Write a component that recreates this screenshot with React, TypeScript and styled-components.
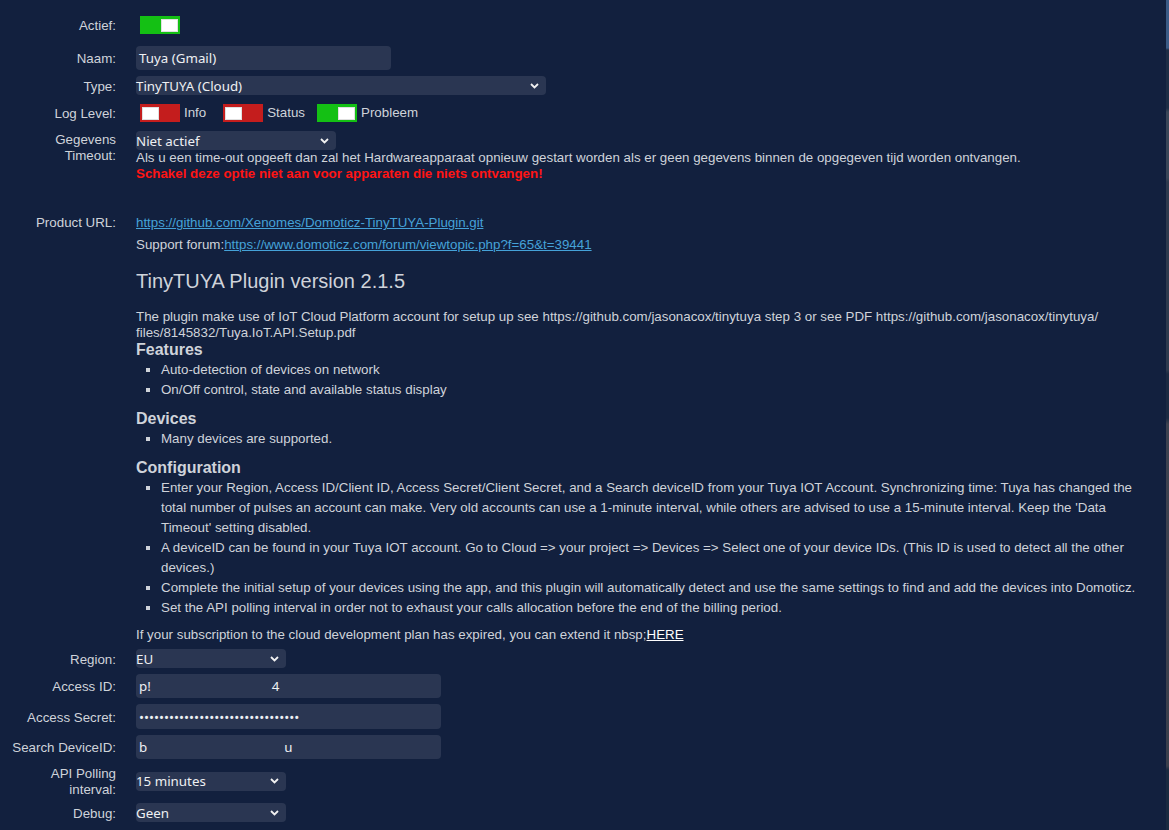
import styled, { createGlobalStyle } from "styled-components";

const GlobalStyle = createGlobalStyle`
  html, body {
    margin: 0;
    padding: 0;
    background: #12203e;
  }
  body {
    font-family: "Liberation Sans", Arial, sans-serif;
    font-size: 13.33px;
    color: #cfd3da;
  }
`;

const Page = styled.div`
  display: flex;
  min-height: 830px;
  background: #12203e;
`;

const Main = styled.div`
  flex: 1;
`;

// thin edge of the panel behind, visible on the right
const EdgeStrip = styled.div`
  width: 3px;
  background: linear-gradient(
    to bottom,
    #3b5b86 0px,
    #3b5b86 48px,
    #1e2d45 50px,
    #1e2d45 108px,
    #3a4658 112px,
    #3a4658 178px,
    #2e3a4e 182px,
    #2e3a4e 370px,
    #1c2a42 374px,
    #1c2a42 418px,
    #3d4250 424px,
    #3a3f4c 766px,
    #1a2a40 770px
  );
`;

const Form = styled.div`
  display: grid;
  grid-template-columns: 116px 1fr;
  column-gap: 20px;
  row-gap: 6px;
  padding: 10px 20px 8px 0;
`;

const Label = styled.div<{ $top?: boolean }>`
  padding-left: 8px;
  text-align: right;
  font-size: 13.33px;
  line-height: 16px;
  color: #cfd3da;
  align-self: ${({ $top }) => ($top ? "start" : "center")};
  transform: translateY(1px);
`;

const Cell = styled.div<{ $h?: number }>`
  display: flex;
  align-items: center;
  min-height: ${({ $h }) => ($h ? `${$h}px` : "auto")};
`;

const Stack = styled.div<{ $pb?: number }>`
  display: flex;
  flex-direction: column;
  align-items: flex-start;
  padding-bottom: ${({ $pb }) => $pb ?? 0}px;
`;

const Toggle = styled.span<{ $on: boolean }>`
  display: inline-flex;
  align-items: center;
  justify-content: ${({ $on }) => ($on ? "flex-end" : "flex-start")};
  box-sizing: border-box;
  width: 40px;
  height: 18px;
  padding: 0 2px;
  margin-left: 4px;
  background: ${({ $on }) => ($on ? "#14c014" : "#c41d1d")};
`;

const Knob = styled.span`
  width: 17px;
  height: 13px;
  box-sizing: border-box;
  background: #ffffff;
  border: 1px solid rgba(0, 0, 0, 0.12);
`;

const LogGroup = styled.div<{ $after?: number }>`
  display: flex;
  align-items: center;
  gap: 4px;
  margin-right: ${({ $after }) => $after ?? 0}px;
  font-size: 13.33px;
  line-height: 16px;
`;

const TextField = styled.div<{ $w: number; $h?: number }>`
  display: flex;
  align-items: center;
  box-sizing: border-box;
  width: ${({ $w }) => $w}px;
  height: ${({ $h }) => $h ?? 24}px;
  padding: 0 3px;
  border-radius: 4px;
  background: #2a3652;
  font-family: "Noto Sans", "Open Sans", sans-serif;
  font-size: 13.33px;
  color: #eef0f3;
  white-space: pre;
`;

const Redacted = styled.span<{ $w: number }>`
  display: inline-block;
  width: ${({ $w }) => $w}px;
`;

const PasswordField = styled.input`
  box-sizing: border-box;
  width: 305px;
  height: 25px;
  padding: 0 3px;
  border: none;
  outline: none;
  border-radius: 4px;
  background: #2a3652;
  font-family: "Noto Sans", "Open Sans", sans-serif;
  font-size: 13.33px;
  color: #eef0f3;
`;

const SelectBox = styled.div<{ $w: number }>`
  display: flex;
  align-items: center;
  justify-content: space-between;
  box-sizing: border-box;
  width: ${({ $w }) => $w}px;
  height: 19px;
  padding: 0 7px 0 0;
  border-radius: 4px;
  background: #2a3652;
  font-family: "Noto Sans", "Open Sans", sans-serif;
  font-size: 13.33px;
  color: #eef0f3;
`;

const Desc = styled.div`
  font-size: 13.33px;
  line-height: 16px;
  color: #cfd3da;
`;

const Warning = styled.div`
  font-size: 13.33px;
  line-height: 16px;
  font-weight: bold;
  color: #ff1414;
`;

const InfoBlock = styled.div`
  display: flex;
  flex-direction: column;
  padding-top: 1px;
`;

const Line = styled.div<{ $mt?: number }>`
  font-size: 13.33px;
  line-height: 16px;
  margin-top: ${({ $mt }) => $mt ?? 0}px;
  color: #cfd3da;
`;

const Link = styled.a<{ $white?: boolean }>`
  color: ${({ $white }) => ($white ? "#ffffff" : "#45a2d8")};
  text-decoration: underline;
`;

const Title = styled.h2`
  margin: 16px 0 0;
  font-size: 20px;
  line-height: 24px;
  font-weight: normal;
  color: #cfd3da;
`;

const Para = styled.p`
  margin: 16px 0 0;
  font-size: 13.33px;
  line-height: 16px;
  color: #cfd3da;
`;

const SubTitle = styled.h3<{ $mt?: number }>`
  margin: ${({ $mt }) => $mt ?? 0}px 0 0;
  font-size: 16px;
  line-height: 18px;
  font-weight: bold;
  color: #cfd3da;
`;

const List = styled.ul`
  margin: 1px 0 0;
  padding-left: 25px;
  list-style: square;
  font-size: 13.33px;
  line-height: 20px;
  color: #cfd3da;
`;

const Chevron = () => (
  <svg width="9" height="6" viewBox="0 0 9 6">
    <path d="M1 1l3.5 3.5L8 1" fill="none" stroke="#f2f2f2" strokeWidth="1.8" />
  </svg>
);

function Select({ value, width }: { value: string; width: number }) {
  return (
    <SelectBox $w={width}>
      <span>{value}</span>
      <Chevron />
    </SelectBox>
  );
}

export default function App() {
  return (
    <Page>
      <GlobalStyle />
      <Main>
        <Form>
          <Label>Actief:</Label>
          <Cell $h={30}>
            <Toggle $on><Knob /></Toggle>
          </Cell>

          <Label>Naam:</Label>
          <Cell>
            <TextField $w={255}>Tuya (Gmail)</TextField>
          </Cell>

          <Label>Type:</Label>
          <Cell>
            <Select value="TinyTUYA (Cloud)" width={410} />
          </Cell>

          <Label>Log Level:</Label>
          <Cell $h={24}>
            <LogGroup $after={13}>
              <Toggle $on={false}><Knob /></Toggle>
              <span>Info</span>
            </LogGroup>
            <LogGroup $after={8}>
              <Toggle $on={false}><Knob /></Toggle>
              <span>Status</span>
            </LogGroup>
            <LogGroup>
              <Toggle $on><Knob /></Toggle>
              <span>Probleem</span>
            </LogGroup>
          </Cell>

          <Label $top>Gegevens Timeout:</Label>
          <Stack $pb={26}>
            <Select value="Niet actief" width={200} />
            <Desc>
              Als u een time-out opgeeft dan zal het Hardwareapparaat opnieuw gestart worden als er geen gegevens binnen de opgegeven tijd worden ontvangen.
            </Desc>
            <Warning>Schakel deze optie niet aan voor apparaten die niets ontvangen!</Warning>
          </Stack>

          <Label $top>Product URL:</Label>
          <InfoBlock>
            <Line>
              <Link href="#">https://github.com/Xenomes/Domoticz-TinyTUYA-Plugin.git</Link>
            </Line>
            <Line $mt={6}>
              Support forum:<Link href="#">https://www.domoticz.com/forum/viewtopic.php?f=65&amp;t=39441</Link>
            </Line>
            <Title>TinyTUYA Plugin version 2.1.5</Title>
            <Para>
              The plugin make use of IoT Cloud Platform account for setup up see https://github.com/jasonacox/tinytuya step 3 or see PDF https://github.com/jasonacox/tinytuya/<wbr />files/8145832/Tuya.IoT.API.Setup.pdf
            </Para>
            <SubTitle>Features</SubTitle>
            <List>
              <li>Auto-detection of devices on network</li>
              <li>On/Off control, state and available status display</li>
            </List>
            <SubTitle $mt={10}>Devices</SubTitle>
            <List>
              <li>Many devices are supported.</li>
            </List>
            <SubTitle $mt={10}>Configuration</SubTitle>
            <List>
              <li>
                Enter your Region, Access ID/Client ID, Access Secret/Client Secret, and a Search deviceID from your Tuya IOT Account. Synchronizing time: Tuya has changed the total number of pulses an account can make. Very old accounts can use a 1-minute interval, while others are advised to use a 15-minute interval. Keep the 'Data Timeout' setting disabled.
              </li>
              <li>
                A deviceID can be found in your Tuya IOT account. Go to Cloud =&gt; your project =&gt; Devices =&gt; Select one of your device IDs. (This ID is used to detect all the other devices.)
              </li>
              <li>
                Complete the initial setup of your devices using the app, and this plugin will automatically detect and use the same settings to find and add the devices into Domoticz.
              </li>
              <li>
                Set the API polling interval in order not to exhaust your calls allocation before the end of the billing period.
              </li>
            </List>
            <Line $mt={9}>
              If your subscription to the cloud development plan has expired, you can extend it nbsp;<Link href="#" $white>HERE</Link>
            </Line>
          </InfoBlock>

          <Label>Region:</Label>
          <Cell>
            <Select value="EU" width={150} />
          </Cell>

          <Label>Access ID:</Label>
          <Cell>
            <TextField $w={305}>
              p!<Redacted $w={121} />4
            </TextField>
          </Cell>

          <Label>Access Secret:</Label>
          <Cell>
            <PasswordField type="password" readOnly value="********************************" />
          </Cell>

          <Label>Search DeviceID:</Label>
          <Cell>
            <TextField $w={305}>
              b<Redacted $w={137} />u
            </TextField>
          </Cell>

          <Label>API Polling interval:</Label>
          <Cell $h={32}>
            <Select value="15 minutes" width={150} />
          </Cell>

          <Label>Debug:</Label>
          <Cell>
            <Select value="Geen" width={150} />
          </Cell>
        </Form>
      </Main>
      <EdgeStrip />
    </Page>
  );
}
